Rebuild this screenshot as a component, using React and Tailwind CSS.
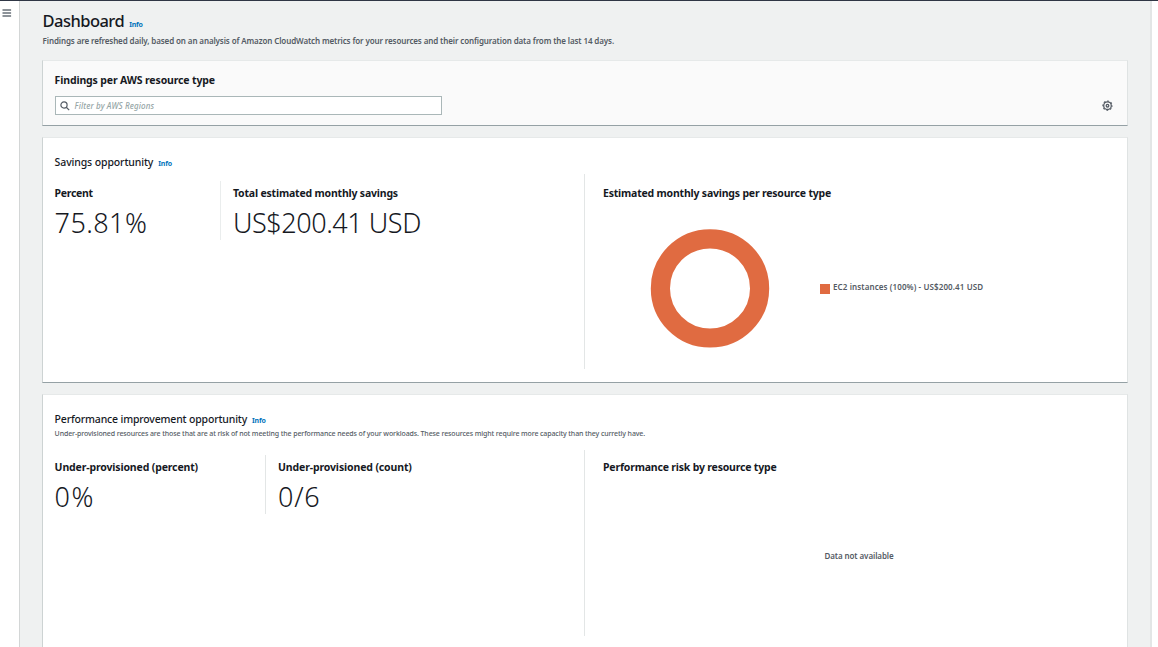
import React from "react";

function Info({ className = "" }) {
  return (
    <a className={"text-[7px] leading-[10px] font-bold tracking-[-0.2px] text-[#0073bb] " + className}>
      Info
    </a>
  );
}

function Card({ className = "", children }) {
  return (
    <section
      className={
        "w-[1086px] shrink-0 border border-t-[#e6e9e9] border-r-[#dfe3e3] border-b-[#95a1a5] border-l-[#cdd3d3] " +
        className
      }
    >
      {children}
    </section>
  );
}

function Label({ className = "", children }) {
  return (
    <h3 className={"text-[10.5px] leading-[16px] font-bold whitespace-nowrap text-[#16191f] " + className}>
      {children}
    </h3>
  );
}

function Value({ className = "", children }) {
  return (
    <div className={"mt-[4px] text-[27px] leading-[36px] font-light whitespace-nowrap text-[#16191f] " + className}>
      {children}
    </div>
  );
}

function MenuIcon() {
  return (
    <svg width="10" height="9" viewBox="0 0 10 9" className="block" fill="none" stroke="#687078" strokeWidth="1.4">
      <path d="M0.5 1h8.6M0.5 4h8.6M0.5 7h8.6" />
    </svg>
  );
}

function SearchIcon() {
  return (
    <svg width="10" height="10" viewBox="0 0 10 10" className="block shrink-0" fill="none" stroke="#545b64" strokeWidth="1.2">
      <circle cx="4" cy="4" r="3.1" />
      <path d="M6.3 6.3L9.2 9.1" />
    </svg>
  );
}

function GearIcon() {
  return (
    <svg width="12" height="12" viewBox="0 0 12 12" className="block" fill="none" stroke="#545b64">
      <circle cx="6.5" cy="5.7" r="3.8" strokeWidth="1.3" />
      <circle cx="6.5" cy="5.7" r="4.6" strokeWidth="1.1" strokeDasharray="1.8 1.813" strokeDashoffset="0.9" />
      <circle cx="6.5" cy="5.7" r="1.3" strokeWidth="1.3" />
    </svg>
  );
}

export default function App() {
  return (
    <div className="flex h-[647px] w-[1158px] flex-col overflow-hidden border-t border-[#2f3645] bg-white font-['Noto_Sans','Open_Sans',sans-serif] text-[#16191f]">
      <div className="flex min-h-0 flex-1">
        <aside className="w-5 shrink-0 border-r border-[#d3d6d6] bg-white pt-2 pl-[2px]">
          <MenuIcon />
        </aside>

        <main className="flex min-w-0 flex-1 flex-col bg-[#eff1f1] pl-[22px]">
          <header className="h-[59px] shrink-0 pt-[8px] pl-[0.6px]">
            <div className="flex items-baseline">
              <h1 className="text-[16.5px] leading-[24px] font-medium tracking-[-0.55px]">Dashboard</h1>
              <Info className="ml-[5px]" />
            </div>
            <p className="mt-[2px] text-[8px] leading-[12px] font-semibold tracking-[-0.115px] whitespace-nowrap text-[#545b64]">
              Findings are refreshed daily, based on an analysis of Amazon CloudWatch metrics for your resources and
              their configuration data from the last 14 days.
            </p>
          </header>

          <Card className="h-[66px] bg-[#fafafa] pt-[11px] pr-[14px] pl-[11.6px]">
            <Label className="tracking-[-0.14px]">Findings per AWS resource type</Label>
            <div className="mt-[8px] flex items-center justify-between">
              <div className="flex h-[19px] w-[387px] items-center gap-[5px] border border-[#aab7b8] bg-white pl-[4px]">
                <SearchIcon />
                <span className="text-[8px] leading-[12px] font-medium tracking-[0.12px] whitespace-nowrap text-[#95a5a6] italic">
                  Filter by AWS Regions
                </span>
              </div>
              <GearIcon />
            </div>
          </Card>

          <Card className="mt-[11px] flex h-[246px] bg-white pl-[11px]">
            <div className="w-[530px] shrink-0 pt-[16px] pl-[0.6px]">
              <div className="flex items-baseline">
                <h2 className="text-[10.5px] leading-[16px] font-medium tracking-[-0.12px]">Savings opportunity</h2>
                <Info className="ml-[5px]" />
              </div>
              <div className="mt-[11px] flex h-[59px]">
                <div className="w-[166.4px] shrink-0 border-r border-[#eaeded]">
                  <Label className="mt-1 tracking-[-0.3px]">Percent</Label>
                  <Value className="tracking-[0.42px]">75.81%</Value>
                </div>
                <div className="pl-[12px]">
                  <Label className="mt-1 tracking-[-0.19px]">Total estimated monthly savings</Label>
                  <Value className="tracking-[-0.45px]">US$200.41 USD</Value>
                </div>
              </div>
            </div>
            <div className="mt-[36px] h-[195px] flex-1 border-l border-[#e3e6e6] pt-[11px] pl-[18px]">
              <Label className="tracking-[-0.2px]">Estimated monthly savings per resource type</Label>
              <div className="mt-[27px] flex items-center pl-[47px]">
                <svg width="120" height="120" viewBox="0 0 120 120" className="block">
                  <circle cx="60" cy="60.4" r="49.6" fill="none" stroke="#e06b41" strokeWidth="19.2" />
                </svg>
                <div className="mt-px ml-[50px] flex items-center gap-[3px]">
                  <span className="size-[10px] bg-[#e06b41]" />
                  <span className="-mt-[3px] text-[8px] leading-[12px] font-semibold tracking-[0.11px] whitespace-nowrap text-[#545b64]">
                    EC2 instances (100%) - US$200.41 USD
                  </span>
                </div>
              </div>
            </div>
          </Card>

          <Card className="mt-[11px] flex h-[270px] bg-white pl-[11px]">
            <div className="w-[530px] shrink-0 pt-[16px] pl-[0.6px]">
              <div className="flex items-baseline">
                <h2 className="text-[10.5px] leading-[16px] font-medium tracking-[-0.17px] whitespace-nowrap">
                  Performance improvement opportunity
                </h2>
                <Info className="ml-[5px]" />
              </div>
              <p className="mt-[1px] w-[600px] text-[7px] leading-[11px] font-medium tracking-[-0.113px] whitespace-nowrap text-[#545b64]">
                Under-provisioned resources are those that are at risk of not meeting the performance needs of your
                workloads. These resources might require more capacity than they curretly have.
              </p>
              <div className="mt-[16px] flex h-[59px]">
                <div className="w-[211.4px] shrink-0 border-r border-[#e3e6e6]">
                  <Label className="mt-1 tracking-[-0.145px]">Under-provisioned (percent)</Label>
                  <Value className="tracking-[1.6px]">0%</Value>
                </div>
                <div className="pl-[12px]">
                  <Label className="mt-1 tracking-[-0.13px]">Under-provisioned (count)</Label>
                  <Value className="tracking-[0.8px]">0/6</Value>
                </div>
              </div>
            </div>
            <div className="mt-[55px] h-[186px] flex-1 border-l border-[#e3e6e6] pt-[9px] pl-[18px]">
              <Label className="tracking-[-0.19px]">Performance risk by resource type</Label>
              <p className="mt-[75px] w-[512px] text-center text-[8px] leading-[12px] font-semibold tracking-[-0.09px] text-[#545b64]">
                Data not available
              </p>
            </div>
          </Card>
        </main>

        <aside className="w-2 shrink-0 border-l-2 border-[#e3e6e6] bg-white" />
      </div>
    </div>
  );
}
